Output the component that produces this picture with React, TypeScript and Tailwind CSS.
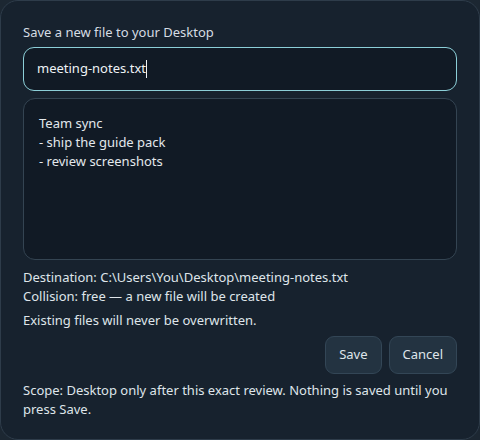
import React from "react";

export default function App() {
  return (
    <div className="h-[440px] w-[480px] bg-[#1c2732] font-['Noto_Sans',sans-serif] text-[13px] text-[#dfe5ea]">
      <div className="flex h-full flex-col rounded-[18px] border border-[#2e3c4a] bg-[#17222e] px-[22px] pt-[21px]">
        <p className="leading-[20px] text-[#d5dce3]">Save a new file to your Desktop</p>
        <div className="mt-[5px] flex h-[44px] items-center rounded-[11px] border border-[#8ccfd8] bg-[#111a25] px-[13px]">
          <span className="text-[13px] text-[#eef2f5]">meeting-notes.txt</span>
          <span className="h-[18px] w-px bg-[#eef2f5]" />
        </div>
        <div className="mt-[7px] h-[162px] rounded-[12px] border border-[#344452] bg-[#111a25] px-[15px] pt-[15px] leading-[19px] text-[#e3e8ec]">
          <p>Team sync</p>
          <p>- ship the guide pack</p>
          <p>- review screenshots</p>
        </div>
        <div className="mt-[8px] leading-[19px]">
          <p>Destination: C:\Users\You\Desktop\meeting-notes.txt</p>
          <p>Collision: free — a new file will be created</p>
        </div>
        <p className="mt-[5px] leading-[19px]">Existing files will never be overwritten.</p>
        <div className="mt-[6px] flex justify-end gap-[7px]">
          <button className="h-[38px] rounded-[9px] border border-[#334656] bg-[#233341] px-[13px] text-[13px] text-[#dfe5ea]">
            Save
          </button>
          <button className="h-[38px] rounded-[9px] border border-[#334656] bg-[#233341] px-[13px] text-[13px] text-[#dfe5ea]">
            Cancel
          </button>
        </div>
        <p className="mt-[7px] leading-[19px]">
          Scope: Desktop only after this exact review. Nothing is saved until you press Save.
        </p>
      </div>
    </div>
  );
}
